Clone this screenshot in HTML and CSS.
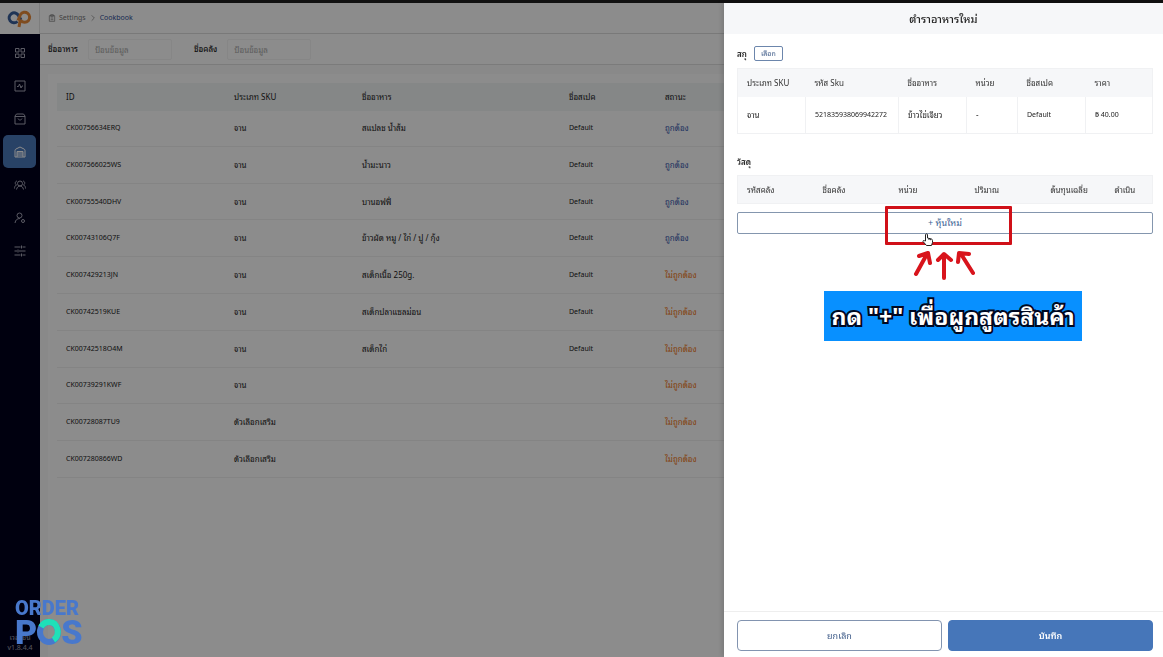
FILE: index.html
```html
<!DOCTYPE html>
<html lang="th">
  <head>
    <meta charset="UTF-8" />
    <meta name="viewport" content="width=device-width, initial-scale=1" />
    <title>Cookbook</title>
    <link rel="stylesheet" href="styles.css">
  </head>
  <body>
    <div class="app">
      <aside class="sidebar">
        <a class="brand" href="#" aria-label="Home">
          <svg width="25" height="18" viewBox="0 0 25 18" fill="none" stroke-width="3">
            <path d="M10.500 11.500a5 5 0 1 1 1-6L14 10" stroke="#3a5f9c" />
            <path d="M12 17l1-5.500 2-1.200M14 10.700a5 5 0 1 0-.5-6.200L11 10.500" stroke="#e88a3a" />
          </svg>
        </a>
        <nav class="menu">
          <a href="#" aria-label="Dashboard">
            <svg viewBox="0 0 24 24"><path d="M3 3h7v7H3zM14 3h7v7h-7zM3 14h7v7H3zM14 14h7v7h-7z" /></svg>
          </a>
          <a href="#" aria-label="Activity">
            <svg viewBox="0 0 24 24"><path d="M2 2h20v20H2zM6 13h3l2-5 3 8 2-4h2" /></svg>
          </a>
          <a href="#" aria-label="Orders">
            <svg viewBox="0 0 24 24"><path d="M5 2h14l3 4v16H2V6zM2 7h20M8 11c1 4 7 4 8 0" /></svg>
          </a>
          <a class="active" href="#" aria-label="Stock">
            <svg viewBox="0 0 24 24"><path d="M2 22V9q0-2 2-3l8-4 8 4q2 1 2 3v13h-4V11H6v11H2M6 14h12M6 18h12M6 22h12" /></svg>
          </a>
          <a href="#" aria-label="Customers">
            <svg viewBox="0 0 24 24"><circle cx="12" cy="9" r="5" /><path d="M5 21c1-5 4-7 7-7s6 2 7 7M6 4c-5 1-4 7-1 8-3 1-4 4-4 7M18 4c5 1 4 7 1 8 3 1 4 4 4 7" /></svg>
          </a>
          <a href="#" aria-label="Staff">
            <svg viewBox="0 0 24 24"><circle cx="11" cy="7" r="5" /><path d="M2 22c1-6 4-9 10-9" /><circle cx="18" cy="18" r="3" /></svg>
          </a>
          <a href="#" aria-label="Settings">
            <svg viewBox="0 0 24 24"><path d="M1 4h12M17 4h6M15 1v6M1 12h5M10 12h13M8 9v6M1 20h12M17 20h6M15 17v6" /></svg>
          </a>
        </nav>
        <div class="version">เวอร์ชัน<br />v1.8.4.4</div>
      </aside>

      <main class="main">
        <div class="breadcrumb">
          <svg viewBox="0 0 24 24"><path d="M4 5h16v17H4zM8 2h8v5H8zM8 12h8M8 17h8" /></svg>
          <a href="#">Settings</a>
          <svg class="chevron" viewBox="0 0 24 24"><path d="M8 4l8 8-8 8" /></svg>
          <a class="current" href="#">Cookbook</a>
        </div>
        <form class="filters">
          <div class="field">
            <label for="foodName">ชื่ออาหาร</label>
            <input type="text" id="foodName" placeholder="ป้อนข้อมูล" />
          </div>
          <div class="field">
            <label for="stockName">ชื่อคลัง</label>
            <input type="text" id="stockName" placeholder="ป้อนข้อมูล" />
          </div>
        </form>
        <section class="card">
          <table class="list">
            <colgroup>
              <col class="col-id" /><col class="col-type" /><col class="col-name" /><col class="col-spec" /><col />
            </colgroup>
            <thead>
              <tr><th>ID</th><th>ประเภท SKU</th><th>ชื่ออาหาร</th><th>ชื่อสเปค</th><th>สถานะ</th></tr>
            </thead>
            <tbody>
              <tr><td class="latin">CK00756634ERQ</td><td>จาน</td><td>สแปลช น้ำส้ม</td><td class="latin">Default</td><td class="ok">ถูกต้อง</td></tr>
              <tr><td class="latin">CK007566025WS</td><td>จาน</td><td>น้ำมะนาว</td><td class="latin">Default</td><td class="ok">ถูกต้อง</td></tr>
              <tr><td class="latin">CK00755540DHV</td><td>จาน</td><td>บานอฟฟี่</td><td class="latin">Default</td><td class="ok">ถูกต้อง</td></tr>
              <tr><td class="latin">CK00743106Q7F</td><td>จาน</td><td>ข้าวผัด หมู / ไก่ / ปู / กุ้ง</td><td class="latin">Default</td><td class="ok">ถูกต้อง</td></tr>
              <tr><td class="latin">CK007429213JN</td><td>จาน</td><td>สเต็กเนื้อ 250g.</td><td class="latin">Default</td><td class="bad">ไม่ถูกต้อง</td></tr>
              <tr><td class="latin">CK00742519KUE</td><td>จาน</td><td>สเต็กปลาแซลม่อน</td><td class="latin">Default</td><td class="bad">ไม่ถูกต้อง</td></tr>
              <tr><td class="latin">CK00742518O4M</td><td>จาน</td><td>สเต็กไก่</td><td class="latin">Default</td><td class="bad">ไม่ถูกต้อง</td></tr>
              <tr><td class="latin">CK00739291KWF</td><td>จาน</td><td></td><td></td><td class="bad">ไม่ถูกต้อง</td></tr>
              <tr><td class="latin">CK00728087TU9</td><td>ตัวเลือกเสริม</td><td></td><td></td><td class="bad">ไม่ถูกต้อง</td></tr>
              <tr><td class="latin">CK007280866WD</td><td>ตัวเลือกเสริม</td><td></td><td></td><td class="bad">ไม่ถูกต้อง</td></tr>
            </tbody>
          </table>
        </section>
      </main>
    </div>

    <div class="mask"></div>

    <!-- drawer -->
    <div class="drawer">
      <h1 class="drawer-title">ตำราอาหารใหม่</h1>
      <div class="drawer-body">
        <div class="section-head">
          <h2>สกุ</h2>
          <button type="button" class="btn-small">เลือก</button>
        </div>
        <table class="grid sku">
          <colgroup>
            <col class="w-type" /><col class="w-code" /><col class="w-type" /><col class="w-unit" /><col class="w-type" /><col />
          </colgroup>
          <thead>
            <tr><th>ประเภท SKU</th><th>รหัส Sku</th><th>ชื่ออาหาร</th><th>หน่วย</th><th>ชื่อสเปค</th><th>ราคา</th></tr>
          </thead>
          <tbody>
            <tr><td>จาน</td><td class="latin">521835938069942272</td><td>ข้าวไข่เจียว</td><td>-</td><td class="latin">Default</td><td class="latin">฿ 40.00</td></tr>
          </tbody>
        </table>
        <div class="section-head material">
          <h2>วัสดุ</h2>
        </div>
        <table class="grid">
          <colgroup>
            <col class="w-col" /><col class="w-col" /><col class="w-col" /><col class="w-col" /><col class="w-cost" /><col />
          </colgroup>
          <thead>
            <tr><th>รหัสคลัง</th><th>ชื่อคลัง</th><th>หน่วย</th><th>ปริมาณ</th><th>ต้นทุนเฉลี่ย</th><th>ดำเนิน</th></tr>
          </thead>
        </table>
        <div class="add-wrap">
          <button type="button" class="btn-add">+ หุ้นใหม่</button>
          <div class="highlight"></div>
          <svg class="cursor" viewBox="0 0 11 13">
            <path d="M3.500 8V1.500q1-1.200 2 0V5l4 1q1 .4 1 1.500v2L9.500 12.500h-5L1 8.500q0-1.500 1.500-.8zM7 5.500V7M8.700 6v1.200" fill="#fff" stroke="#222" stroke-width="1" />
          </svg>
          <svg class="arrows" viewBox="0 0 62 30" fill="none" stroke="#d8141c" stroke-width="4" stroke-linecap="round" stroke-linejoin="round">
            <path d="M3 24L14 4M6 6l9-3 2 10" />
            <path d="M31 28V5M25 10l6-6 7 6" />
            <path d="M60 23L48 4M45 12l1-9 10 1" />
          </svg>
          <div class="caption">กด "+" เพื่อผูกสูตรสินค้า</div>
        </div>
      </div>
      <div class="drawer-footer">
        <button type="button" class="btn-cancel">ยกเลิก</button>
        <button type="button" class="btn-save">บันทึก</button>
      </div>
    </div>

    <div class="watermark">
      <div class="line-order">ORDER</div>
      <div class="line-pos">
        <span>P</span>
        <svg viewBox="0 0 24 26" fill="none" stroke-width="6">
          <ellipse cx="12" cy="13" rx="9" ry="10" stroke="#4878cc" />
          <path d="M4 8C8 1 18 1 20.500 10c1 5-1 9-4 11" stroke="#1fe0b8" />
        </svg>
        <span>S</span>
      </div>
    </div>
  </body>
</html>
```
FILE: styles.css
```css
* {
  box-sizing: border-box;
}
body {
  margin: 0;
  border-top: 3px solid #111;
  font-family: "Noto Sans", "Noto Sans Thai Looped", "Noto Sans Thai", sans-serif;
  font-size: 8px;
  line-height: 12px;
  color: #222;
  background: #fff;
  overflow: hidden;
}
button,
input {
  font: inherit;
  color: inherit;
}
a {
  color: inherit;
  text-decoration: none;
}
svg {
  display: block;
}
table {
  border-collapse: collapse;
  table-layout: fixed;
  width: 100%;
}
th,
td {
  text-align: left;
  font-weight: 400;
  white-space: nowrap;
}
.latin {
  font-size: 7px;
}
.app {
  display: flex;
  min-height: calc(100vh - 3px);
}

/* sidebar */
.sidebar {
  display: flex;
  flex-direction: column;
  width: 40px;
  background: #00001c;
}
.brand {
  display: flex;
  align-items: center;
  justify-content: center;
  height: 31px;
  background: #fff;
  border-right: 1px solid #e4e4e4;
}
.menu {
  display: flex;
  flex-direction: column;
  align-items: center;
  padding: 2px 1px 0 0;
}
.menu a {
  display: flex;
  align-items: center;
  justify-content: center;
  width: 33px;
  height: 33px;
  border-radius: 5px;
  color: #a8a8b8;
}
.menu .active {
  background: #4a78ba;
  color: #fff;
}
.menu svg,
.breadcrumb svg {
  width: 12px;
  height: 12px;
  fill: none;
  stroke: currentColor;
  stroke-width: 2;
}
.version {
  margin-top: auto;
  padding-bottom: 4px;
  text-align: center;
  font-size: 7px;
  line-height: 10px;
  color: #a0a0b0;
}

/* page */
.main {
  flex: 1;
  background: #f9fafa;
}
.breadcrumb {
  display: flex;
  align-items: center;
  gap: 3px;
  height: 31px;
  padding-left: 8px;
  font-size: 7px;
  color: #777;
  background: #fff;
  border-bottom: 1px solid #ddd;
}
.breadcrumb svg {
  width: 8px;
  height: 8px;
}
.breadcrumb .current {
  color: #2f4f96;
}
.filters {
  display: flex;
  align-items: center;
  gap: 22px;
  height: 31px;
  padding-left: 8px;
  background: #fff;
  border-bottom: 1px solid #e0e0e0;
}
.field {
  display: flex;
  align-items: center;
  gap: 10px;
}
.field label {
  font-weight: 500;
}
.field input {
  width: 84px;
  height: 21px;
  padding: 0 6px;
  border: 1px solid #f4f4f4;
  border-radius: 2px;
  background: #fff;
}
.field input::placeholder {
  color: #aaa;
}
.card {
  min-height: calc(100vh - 74px);
  margin: 9px 8px 0;
  padding: 9px;
  background: #fff;
}
.list {
  height: 395px;
}
.list th {
  height: 28px;
  padding: 0 9px;
  background: #f2f6f6;
}
.list td {
  padding: 0 9px;
  border-bottom: 1px solid #f0f0f0;
}
.list .ok {
  color: #3a5cb0;
}
.list .bad {
  color: #f07818;
}
.col-id {
  width: 168px;
}
.col-type {
  width: 128px;
}
.col-name {
  width: 207px;
}
.col-spec {
  width: 96px;
}
.mask {
  position: fixed;
  inset: 3px 0 0;
  background: rgba(0, 0, 0, 0.45);
}

/* drawer */
.drawer {
  position: fixed;
  top: 3px;
  right: 0;
  bottom: 0;
  display: flex;
  flex-direction: column;
  width: 439px;
  max-width: 100%;
  background: #fff;
  box-shadow: -2px 0 5px rgba(0, 0, 0, 0.15);
}
.drawer-title {
  margin: 0;
  padding: 8px;
  font-size: 11px;
  line-height: 15px;
  font-weight: 500;
  text-align: center;
  background: #f6f7f9;
}
.drawer-body {
  flex: 1;
  padding: 12px 10px 0 13px;
}
.section-head {
  display: flex;
  align-items: center;
  gap: 7px;
  margin-bottom: 7px;
}
.section-head h2 {
  margin: 0;
  font-size: 8px;
  font-weight: 600;
}
.material {
  margin-top: 22px;
}
.btn-small {
  width: 29px;
  height: 15px;
  padding: 0;
  font-size: 7px;
  line-height: 12px;
  color: #44608c;
  background: #fff;
  border: 1px solid #6c86ac;
  border-radius: 2px;
}
.grid {
  border: 1px solid #f0f1f3;
}
.grid th {
  height: 28px;
  padding: 0 0 0 9px;
  color: #333;
  background: #f6f7f9;
}
.grid td {
  height: 37px;
  padding: 0 0 0 9px;
  border-right: 1px solid #f0f1f3;
}
.w-type {
  width: 68px;
}
.w-code {
  width: 93px;
}
.w-unit {
  width: 51px;
}
.w-col {
  width: 76px;
}
.w-cost {
  width: 64px;
}
.add-wrap {
  position: relative;
  margin-top: 8px;
}
.btn-add {
  width: 100%;
  height: 22px;
  padding: 0;
  font-size: 9px;
  color: #3d5f94;
  background: #fff;
  border: 1px solid #8496ae;
  border-radius: 2px;
}
.highlight {
  position: absolute;
  top: -6px;
  left: 148px;
  width: 127px;
  height: 39px;
  border: 3px solid #d01018;
  border-radius: 1px;
}
.cursor {
  position: absolute;
  top: 21px;
  left: 185px;
  width: 11px;
  height: 13px;
}
.arrows {
  position: absolute;
  top: 38px;
  left: 176px;
  width: 62px;
  height: 30px;
}
.caption {
  position: absolute;
  top: 79px;
  left: 87px;
  width: 258px;
  font-size: 23px;
  line-height: 50px;
  font-weight: 700;
  text-align: center;
  white-space: nowrap;
  color: #fff;
  background: #0890ff;
  -webkit-text-stroke: 4px #000822;
  paint-order: stroke fill;
}
.drawer-footer {
  display: flex;
  gap: 6px;
  padding: 8px 10px 6px 13px;
  border-top: 1px solid #eee;
}
.drawer-footer button {
  flex: 1;
  height: 31px;
  font-size: 9px;
  border: 1px solid #8294b0;
  border-radius: 4px;
}
.drawer-footer .btn-cancel {
  color: #44608c;
  background: #fff;
}
.drawer-footer .btn-save {
  font-weight: 600;
  color: #fff;
  background: #4676b9;
  border-color: #4676b9;
}

/* channel logo */
.watermark {
  position: fixed;
  left: 15px;
  bottom: 11px;
  font-family: Roboto, sans-serif;
  font-weight: 900;
  color: #4878cc;
}
.line-order {
  font-size: 20px;
  line-height: 20px;
}
.line-pos {
  display: flex;
  align-items: center;
  font-size: 34px;
  line-height: 28px;
}
.line-pos svg {
  width: 24px;
  height: 26px;
}
```
